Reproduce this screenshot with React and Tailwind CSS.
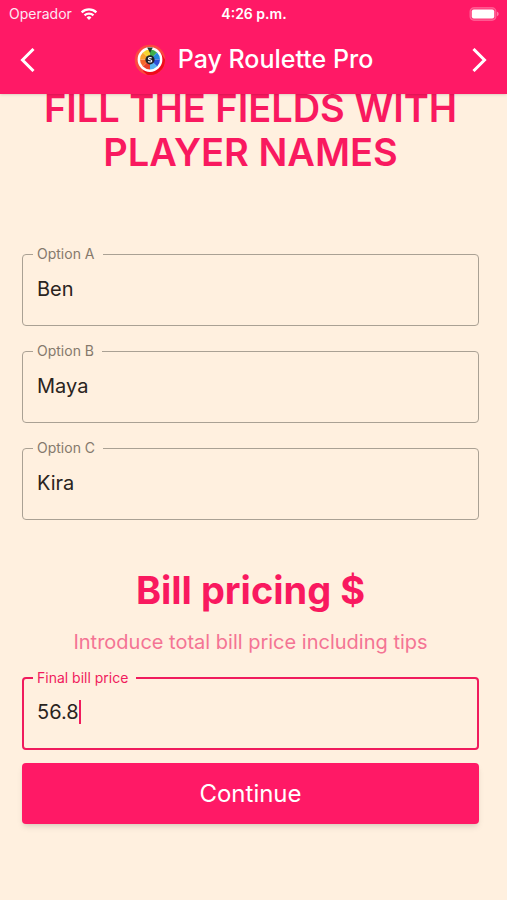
import React, { useState } from "react";

const StatusBar = () => {
  return (
    <div className="grid grid-cols-3 items-center h-[27px] pl-[9px] pr-2 text-sm text-white">
      <div className="flex items-center gap-2 text-pink-100">
        <span>Operador</span>
        <svg className="w-[18px] h-[14px] text-white" viewBox="0 0 20 16" fill="none" stroke="currentColor" strokeWidth="2.6">
          <path d="M1.6 6.2a12 12 0 0 1 16.8 0" />
          <path d="M4.9 9.6a7.3 7.3 0 0 1 10.2 0" />
          <path d="M10 14.8 7.2 12a4 4 0 0 1 5.6 0z" fill="currentColor" stroke="none" />
        </svg>
      </div>
      <span className="font-semibold text-center">4:26 p.m.</span>
      <svg className="w-[30px] h-[14px] justify-self-end" viewBox="0 0 30 14">
        <rect x="1" y="0.7" width="26" height="12.6" rx="4" fill="#fff" fillOpacity="0.15" stroke="#fff" strokeOpacity="0.25" strokeWidth="1.2" />
        <rect x="2.8" y="2.4" width="22.4" height="9.2" rx="2" fill="#fff" />
        <path d="M28.2 4.8c1.8.6 1.8 3.8 0 4.4z" fill="#fff" fillOpacity="0.5" />
      </svg>
    </div>
  );
};

const RouletteLogo = () => {
  return (
    <svg className="w-8 h-8" viewBox="0 0 32 32">
      <circle cx="16" cy="16" r="15.2" fill="#fa4b40" />
      <path d="M27 9 31 15.5A15 15 0 0 1 13 30.8L9 27z" fill="#f00a1c" />
      <circle cx="16" cy="15.5" r="11.4" fill="#fff" stroke="#fff" strokeWidth="2" />
      <path d="M16 15.5V5.5a10 10 0 0 1 7.1 2.9z" fill="#3fae4a" />
      <path d="M16 15.5 23.1 8.4a10 10 0 0 1 2.9 7.1z" fill="#2587dc" />
      <path d="M16 15.5H26a10 10 0 0 1-2.9 7.1z" fill="#2b50d8" />
      <path d="M16 15.5 23.1 22.6A10 10 0 0 1 16 25.5z" fill="#54b4f0" />
      <path d="M16 15.5V25.5a10 10 0 0 1-7.1-2.9z" fill="#e8402a" />
      <path d="M16 15.5 8.9 22.6A10 10 0 0 1 6 15.5z" fill="#f4682c" />
      <path d="M16 15.5H6a10 10 0 0 1 2.9-7.1z" fill="#f9a12c" />
      <path d="M16 15.5 8.9 8.4A10 10 0 0 1 16 5.5z" fill="#f6d52e" />
      <circle cx="16" cy="15.8" r="4.6" fill="#1d2026" />
      <path d="M17.7 14.2c-.8-.9-3.3-.8-3.3.5 0 1.4 3.4.8 3.4 2.2 0 1.3-2.7 1.4-3.6.4" fill="none" stroke="#fff" strokeWidth="1.1" />
      <path d="M13.2 3.4h5.6L16 9z" fill="#26352a" />
    </svg>
  );
};

const Header = () => {
  return (
    <header className="sticky top-0 z-10 pb-px bg-[#ff1966] shadow-sm">
      <StatusBar />
      <div className="flex items-center justify-between h-[66px] px-5 text-white">
        <button aria-label="Back">
          <svg className="w-4 h-6" viewBox="0 0 16 24" fill="none" stroke="currentColor" strokeWidth="3">
            <path d="M13.5 1 2.5 12l11 11" />
          </svg>
        </button>
        <div className="flex items-center gap-3">
          <RouletteLogo />
          <h1 className="text-[25px] font-medium">Pay Roulette Pro</h1>
        </div>
        <button aria-label="Next">
          <svg className="w-4 h-6" viewBox="0 0 16 24" fill="none" stroke="currentColor" strokeWidth="3">
            <path d="M2.5 1l11 11-11 11" />
          </svg>
        </button>
      </div>
    </header>
  );
};

const OptionField = ({ id, label, value, onChange }) => {
  return (
    <fieldset className="h-20 px-[10px] border border-[#aaa194] rounded">
      <legend className="pl-1 pr-2 text-sm leading-4 text-[#85796c]">
        <label htmlFor={id}>{label}</label>
      </legend>
      <input
        id={id}
        type="text"
        value={value}
        onChange={onChange}
        className="w-full px-1 mt-[15px] text-xl leading-6 text-[#2a241e] bg-transparent outline-none"
      />
    </fieldset>
  );
};

const PriceField = ({ value, onChange }) => {
  return (
    <fieldset className="h-20 px-[9px] border-2 border-[#f01b5d] rounded">
      <legend className="pl-1 pr-2 text-sm leading-4 text-[#f01b5d]">
        <label htmlFor="price">Final bill price</label>
      </legend>
      <div className="flex items-center px-1 mt-[14px]">
        <input
          id="price"
          type="text"
          inputMode="decimal"
          value={value}
          onChange={onChange}
          className="field-sizing-content text-xl leading-6 text-[#2a241e] bg-transparent outline-none caret-transparent"
        />
        <span className="w-[2px] h-6 bg-[#f01b5d]"></span>
      </div>
    </fieldset>
  );
};

const App = () => {
  const [players, setPlayers] = useState({ A: "Ben", B: "Maya", C: "Kira" });
  const [price, setPrice] = useState("56.8");

  return (
    <div className="min-h-screen bg-[#fff0df] font-['Inter',sans-serif]">
      <Header />
      <main className="flex flex-col pl-[22px] pr-7 pb-8">
        <h2 className="-mt-2 text-[38px] leading-[44px] font-semibold text-center text-[#f9195f]">
          FILL THE FIELDS WITH PLAYER NAMES
        </h2>
        <div className="flex flex-col gap-[17px] mt-[72px]">
          {Object.keys(players).map((key) => (
            <OptionField
              key={key}
              id={`option-${key}`}
              label={`Option ${key}`}
              value={players[key]}
              onChange={(e) => setPlayers({ ...players, [key]: e.target.value })}
            />
          ))}
        </div>
        <h2 className="mt-12 text-[38px] leading-[44px] font-bold text-center text-[#f9195f]">
          Bill pricing $
        </h2>
        <p className="mt-4 mb-[14px] text-xl leading-7 text-center text-[#f47494]">
          Introduce total bill price including tips
        </p>
        <PriceField value={price} onChange={(e) => setPrice(e.target.value)} />
        <button className="h-[61px] mt-[13px] text-2xl text-white bg-[#ff1966] rounded shadow-md">
          Continue
        </button>
      </main>
    </div>
  );
};

export default App;
